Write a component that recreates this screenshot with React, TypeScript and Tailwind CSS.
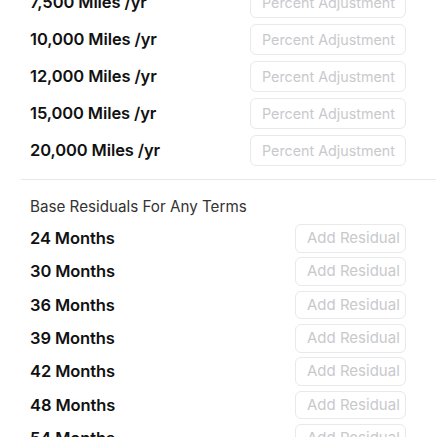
const MILES = ["7,500", "10,000", "12,000", "15,000", "20,000"];
const TERMS = [24, 30, 36, 39, 42, 48, 54];

export default function App() {
  return (
    <div className="h-[437px] w-[436px] overflow-hidden bg-white font-['Inter',sans-serif]">
      <div className="-mt-[16px] flex flex-col">
        {/* mileage adjustments */}
        <div className="flex flex-col pl-[30px] pr-[30px]">
          {MILES.map((m) => (
            <div key={m} className="flex h-[37px] items-center justify-between">
              <span className="text-[16.5px] font-semibold tracking-[-0.1px] text-[#111]">{m} Miles /yr</span>
              <input
                placeholder="Percent Adjustment"
                className="h-[31px] w-[156px] rounded-[6px] border border-[#e9e9eb] pl-[11px] pr-[4px] text-[14.3px] outline-none placeholder:text-[#c9c9cc]"
              />
            </div>
          ))}
        </div>

        <div className="ml-[21px] mt-[10px] h-px bg-[#e8e8ea]" />

        {/* residuals */}
        <div className="flex flex-col pl-[30px] pr-[30px] pt-[16px]">
          <div className="mb-[3px] text-[15.2px] text-[#333]">Base Residuals For Any Terms</div>
          {TERMS.map((t) => (
            <div key={t} className="flex h-[33.3px] items-center justify-between">
              <span className="text-[16.5px] font-semibold tracking-[-0.1px] text-[#111]">{t} Months</span>
              <button className="h-[28.5px] w-[111px] whitespace-nowrap rounded-[6px] border border-[#e9e9eb] px-[11px] text-left text-[15px] text-[#c9c9cc]">
                Add Residual
              </button>
            </div>
          ))}
        </div>
      </div>
    </div>
  );
}
